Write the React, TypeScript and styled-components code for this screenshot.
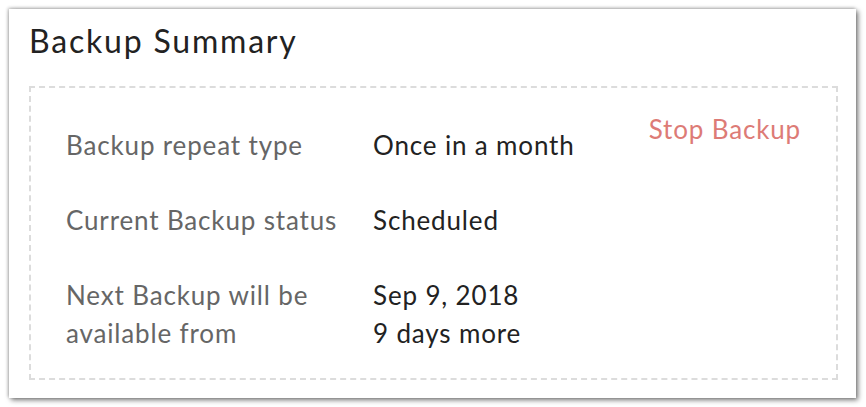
import React from "react";
import styled, { createGlobalStyle } from "styled-components";

const GlobalStyle = createGlobalStyle`
  html, body {
    margin: 0;
    padding: 0;
    background: #ffffff;
  }
  body {
    font-family: "Lato", "Open Sans", sans-serif;
  }
`;

const Page = styled.div`
  padding: 9px 10px 9px 9px;
`;

const Card = styled.section`
  background: #fff;
  height: 389px;
  box-sizing: border-box;
  padding: 12px 18px 18px 20px;
  display: flex;
  flex-direction: column;
  box-shadow: 2px 2px 5px rgba(0, 0, 0, 0.55), -1px -1px 3px rgba(0, 0, 0, 0.25);
`;

const Title = styled.h2`
  margin: 0;
  font-weight: 400;
  font-size: 32px;
  letter-spacing: 1.8px;
  line-height: 40px;
  color: #222;
`;

const DashedBox = styled.div`
  margin-top: 25px;
  flex: 1;
  border: 2px dashed #dcdcdc;
  padding: 38px 35px 0 35px;
  display: grid;
  grid-template-columns: 307px 1fr auto;
  grid-auto-rows: min-content;
  row-gap: 37px;
  align-items: start;
`;

const Text = styled.div`
  font-size: 26px;
  letter-spacing: 0.85px;
  line-height: 38px;
`;

const Label = styled(Text)`
  color: #666;
`;

const Value = styled(Text)`
  color: #222;
`;

const Action = styled(Text).attrs({ as: "a" })`
  color: #dd7b76;
  margin-top: -16px;
  cursor: pointer;
`;

const Empty = styled.div``;

export default function App() {
  return (
    <Page>
      <GlobalStyle />
      <Card>
        <Title>Backup Summary</Title>
        <DashedBox>
          <Label>Backup repeat type</Label>
          <Value>Once in a month</Value>
          <Action>Stop Backup</Action>

          <Label>Current Backup status</Label>
          <Value>Scheduled</Value>
          <Empty />

          <Label>
            Next Backup will be
            <br />
            available from
          </Label>
          <Value>
            Sep 9, 2018
            <br />9 days more
          </Value>
          <Empty />
        </DashedBox>
      </Card>
    </Page>
  );
}
